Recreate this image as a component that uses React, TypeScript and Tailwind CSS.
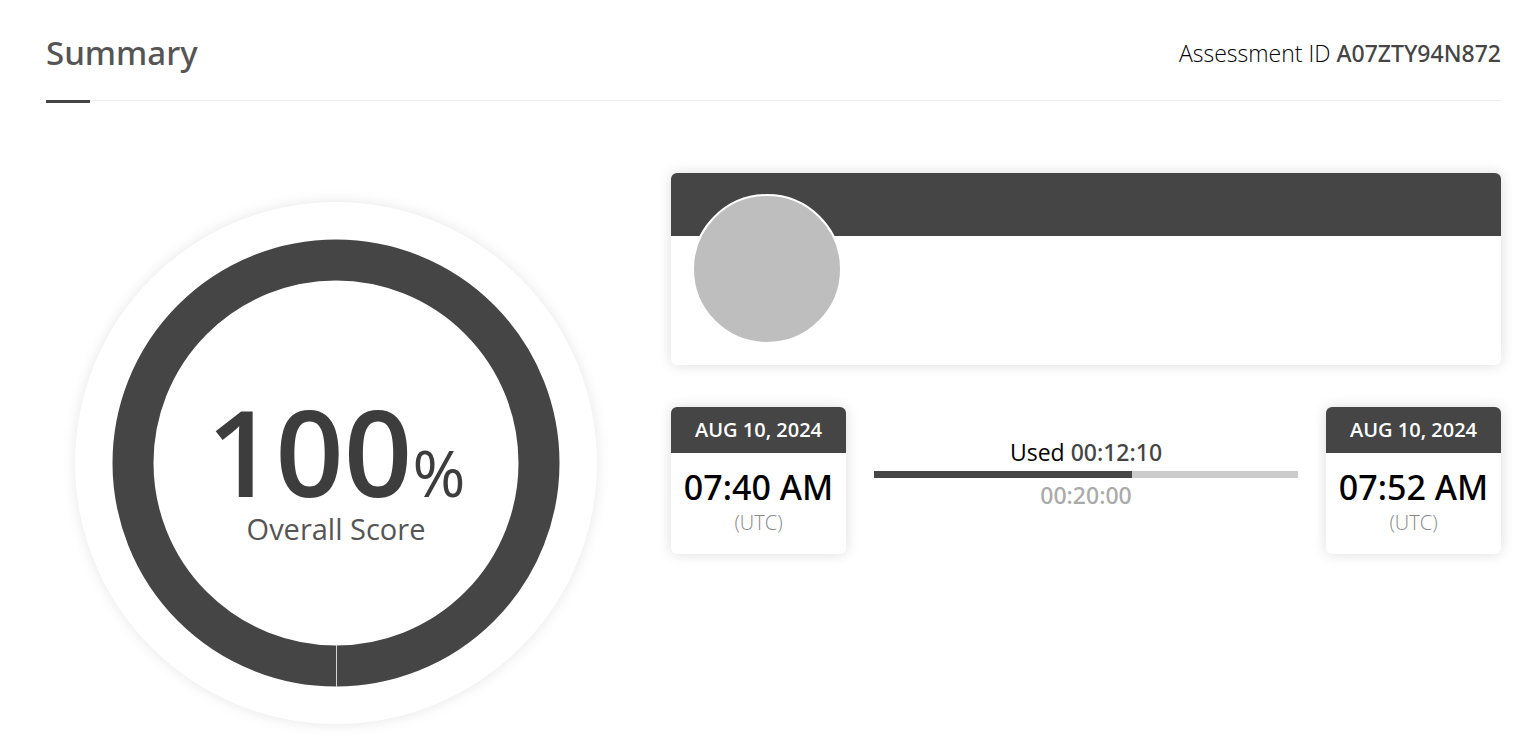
type Stamp = {
  date: string;
  time: string;
  zone: string;
};

const ASSESSMENT_ID = "A07ZTY94N872";
const SCORE = 100;

const STARTED: Stamp = { date: "AUG 10, 2024", time: "07:40 AM", zone: "(UTC)" };
const FINISHED: Stamp = { date: "AUG 10, 2024", time: "07:52 AM", zone: "(UTC)" };

const USED = "00:12:10";
const ALLOWED = "00:20:00";

// Open Sans has no medium weight, so medium text is set in Noto Sans
const MEDIUM = "font-['Noto_Sans',sans-serif] font-medium";

function toSeconds(clock: string) {
  const [h, m, s] = clock.split(":").map(Number);
  return h * 3600 + m * 60 + s;
}

function ScoreRing({ score }: { score: number }) {
  return (
    <div className="relative aspect-square w-full max-w-[522px] rounded-full bg-white shadow-[0_0_14px_rgba(0,0,0,0.1)]">
      <svg viewBox="0 0 522 522" className="block w-full" aria-hidden="true">
        <circle cx="261" cy="261" r="203" fill="none" stroke="#454545" strokeWidth="41" />
        {/* seam where the arc starts and ends */}
        <line x1="261.5" y1="443" x2="261.5" y2="485" stroke="#d4d4d4" strokeWidth="1" />
      </svg>
      <div className="absolute inset-0 flex flex-col items-center justify-center pt-[38px]">
        <div className="flex items-baseline leading-[72px] text-[#3d3d3d]">
          <span className="text-[120px] font-semibold">{score}</span>
          <span className="text-[64px]">%</span>
        </div>
        <div className="text-[29px] leading-10 text-[#555555]">Overall Score</div>
      </div>
    </div>
  );
}

function StampCard({ stamp }: { stamp: Stamp }) {
  return (
    <div className="w-[175px] shrink-0 overflow-hidden rounded-md bg-white text-center shadow-[0_0_14px_rgba(0,0,0,0.14)]">
      <div className="bg-[#454545] text-xl leading-[46px] font-semibold text-white">{stamp.date}</div>
      <div className="pt-3 pb-[18px]">
        <div className={`text-[34px] leading-[44px] text-black ${MEDIUM}`}>{stamp.time}</div>
        <div className="text-xl leading-[27px] font-light text-[#888888]">{stamp.zone}</div>
      </div>
    </div>
  );
}

function TimeUsed() {
  const percent = (toSeconds(USED) / toSeconds(ALLOWED)) * 100;

  return (
    <div className="flex-1 pt-[30px] text-center text-[23px]">
      <div className="mb-1 leading-[30px] text-black">
        Used <span className={`text-[#454545] ${MEDIUM}`}>{USED}</span>
      </div>
      <div className="h-[7px] bg-[#cccccc]">
        <div className="h-full bg-[#454545]" style={{ width: `${percent}%` }} />
      </div>
      <div className={`leading-[34px] text-[#aaaaaa] ${MEDIUM}`}>{ALLOWED}</div>
    </div>
  );
}

export default function App() {
  return (
    <main className="bg-white pr-[33px] pl-[46px] font-['Open_Sans','Noto_Sans',sans-serif]">
      <header className="flex items-center justify-between border-b border-[#eeeeee] pt-[29px] pb-[23px]">
        <h1 className={`text-[33px] leading-[48px] text-[#555555] ${MEDIUM}`}>Summary</h1>
        <p className="text-[23px] font-light text-black">
          Assessment ID <span className={`text-[#454545] ${MEDIUM}`}>{ASSESSMENT_ID}</span>
        </p>
      </header>
      <div className="-mt-px h-[3px] w-11 bg-[#454545]" />

      <div className="grid grid-cols-[2fr_3fr] pt-[70px]">
        <div className="flex justify-center pt-[29px] pr-0.5 pb-4">
          <ScoreRing score={SCORE} />
        </div>

        <div className="pl-[43px]">
          {/* Candidate card */}
          <section className="relative h-48 overflow-hidden rounded-md bg-white shadow-[0_0_14px_rgba(0,0,0,0.14)]">
            <div className="h-[63px] bg-[#454545]" />
            <div className="absolute top-[21px] left-[21px] size-[150px] rounded-full border-2 border-white bg-[#bebebe]" />
          </section>

          <section className="mt-[42px] flex items-start gap-7">
            <StampCard stamp={STARTED} />
            <TimeUsed />
            <StampCard stamp={FINISHED} />
          </section>
        </div>
      </div>
    </main>
  );
}
